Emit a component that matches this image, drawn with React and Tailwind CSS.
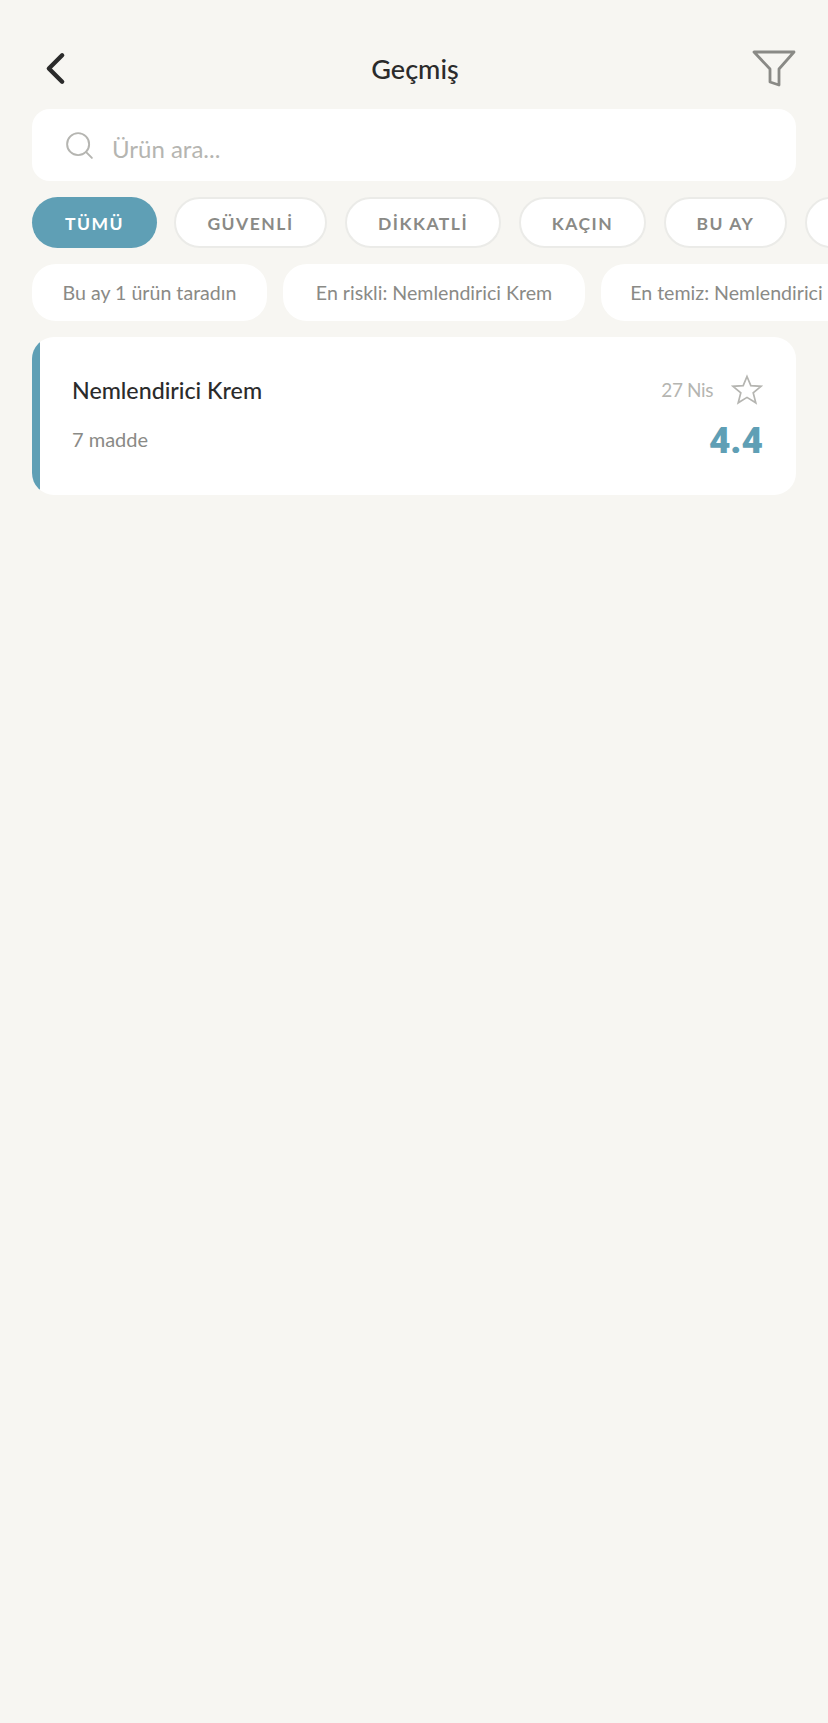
import React from "react";
import { ChevronLeft, Search } from "lucide-react";

const filters = [
  { label: "TÜMÜ", width: "w-[125px] -mr-[1px]", active: true },
  { label: "GÜVENLİ", width: "w-[153px]" },
  { label: "DİKKATLİ", width: "w-[156px]" },
  { label: "KAÇIN", width: "w-[127px]" },
  { label: "BU AY", width: "w-[123px]" },
  { label: "", width: "w-[130px]" }, // runs off the screen, label not visible
];

const stats = [
  { label: "Bu ay 1 ürün taradın", width: "w-[235px]" },
  { label: "En riskli: Nemlendirici Krem", width: "w-[302px]" },
  { label: "En temiz: Nemlendirici Krem", width: "w-[302px]" },
];

const font = "font-['Lato','Liberation_Sans',sans-serif]";

export default function App() {
  return (
    <div className={`min-h-[1723px] w-[828px] overflow-hidden bg-[#f7f6f2] pt-[46px] ${font}`}>
      {/* Header */}
      <div className="flex h-[44px] items-center justify-between px-[32px]">
        <div className="flex w-[44px] items-center">
          <ChevronLeft size={53} strokeWidth={2} className="-ml-[3px] shrink-0 text-[#2b2b2b]" />
        </div>
        <h1 className="pl-[2px] text-[27px] font-medium leading-none text-[#2b2b2b]">Geçmiş</h1>
        <svg width="44" height="38" viewBox="0 0 44 38" fill="none" stroke="#8a8a86" strokeWidth="2.8" strokeLinejoin="round">
          <path d="M2 3 H42 L27 20 V36 L18 33 V20 Z" />
        </svg>
      </div>

      {/* Search */}
      <div className="mx-[32px] mt-[19px] flex h-[72px] items-center rounded-[18px] bg-white pl-[31px]">
        <Search size={33} strokeWidth={1.4} className="text-[#b5b5b1]" />
        <span className="ml-[16px] pt-[8px] text-[24px] text-[#b5b5b1]">Ürün ara...</span>
      </div>

      {/* Filter chips */}
      <div className="ml-[32px] mt-[16px] flex gap-[18px]">
        {filters.map((f, i) => (
          <div
            key={i}
            className={`flex h-[51px] shrink-0 items-center justify-center rounded-full pt-[3px] text-[17.5px] font-bold tracking-[1.5px] ${f.width} ${
              f.active ? "bg-[#5f9fb5] text-white" : "border-2 border-[#ebebe8] bg-white text-[#8a8a86]"
            }`}
          >
            {f.label}
          </div>
        ))}
      </div>

      {/* Stats */}
      <div className="ml-[32px] mt-[16px] flex gap-[16px]">
        {stats.map((s) => (
          <div
            key={s.label}
            className={`flex h-[57px] shrink-0 items-center justify-center whitespace-nowrap rounded-[24px] bg-white text-[19.6px] text-[#8a8a86] ${s.width}`}
          >
            {s.label}
          </div>
        ))}
      </div>

      {/* Card */}
      <div className="mx-[32px] mt-[16px] flex h-[158px] overflow-hidden rounded-[22px] bg-white">
        <div className="w-[8px] shrink-0 bg-[#5f9fb5]" />
        <div className="flex flex-1 justify-between pl-[32px] pr-[33px]">
          <div className="flex flex-col">
            <div className="mt-[37px] text-[23.2px] font-medium leading-[32px] text-[#2b2b2b]">Nemlendirici Krem</div>
            <div className="mt-[20px] text-[20px] leading-[26px] text-[#8a8a86]">7 madde</div>
          </div>
          <div className="flex flex-col items-end">
            <div className="mt-[37px] flex h-[32px] items-center gap-[18px]">
              <span className="text-[19px] tracking-[-0.4px] text-[#b5b5b1]">27 Nis</span>
              <svg width="32" height="32" viewBox="0 0 32 32" fill="none" stroke="#b5b5b1" strokeWidth="1.7" strokeLinejoin="miter">
                <path d="M16 2.5 L19.8 11.6 L30 12.3 L22.2 18.8 L24.8 28.8 L16 23.4 L7.2 28.8 L9.8 18.8 L2 12.3 L12.2 11.6 Z" />
              </svg>
            </div>
            <div className="mt-[13px] font-['Roboto',sans-serif] text-[37px] font-black leading-[44px] text-[#5f9fb5]">4.4</div>
          </div>
        </div>
      </div>
    </div>
  );
}
